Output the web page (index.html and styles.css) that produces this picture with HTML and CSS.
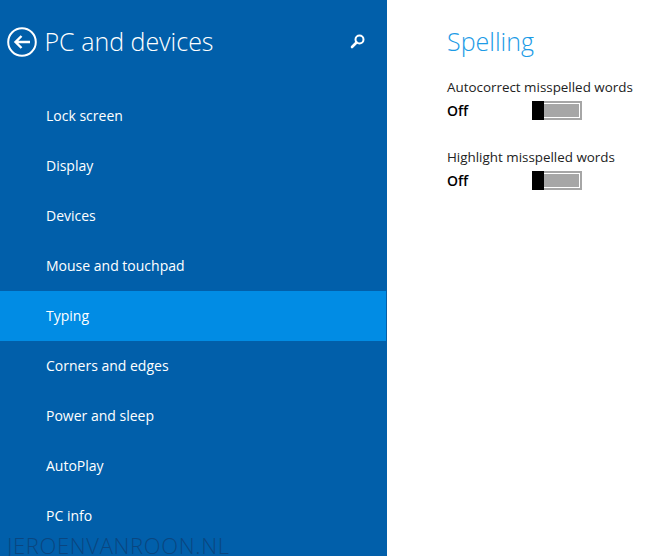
FILE: index.html
```html
<!DOCTYPE html>
<html lang="en">
<head>
<meta charset="utf-8">
<title>PC and devices</title>
<link rel="stylesheet" href="styles.css">
</head>
<body>
<div class="app">
  <nav class="side">
    <header class="head">
      <svg class="back" width="30" height="30" viewBox="0 0 30 30">
        <circle cx="15" cy="15" r="13.8" fill="none" stroke="#fff" stroke-width="2"/>
        <path d="M23 15H9M14.5 9L8.5 15L14.5 21" fill="none" stroke="#fff" stroke-width="2.4"/>
      </svg>
      <h1 class="title">PC and devices</h1>
      <svg class="search" width="16" height="16" viewBox="0 0 16 16">
        <circle cx="9.5" cy="6.5" r="4" fill="none" stroke="#fff" stroke-width="2"/>
        <path d="M6.5 9.5L2 14" fill="none" stroke="#fff" stroke-width="2.6" stroke-linecap="round"/>
      </svg>
    </header>
    <ul class="menu">
      <li class="item">Lock screen</li>
      <li class="item">Display</li>
      <li class="item">Devices</li>
      <li class="item">Mouse and touchpad</li>
      <li class="item active">Typing</li>
      <li class="item">Corners and edges</li>
      <li class="item">Power and sleep</li>
      <li class="item">AutoPlay</li>
      <li class="item">PC info</li>
    </ul>
    <div class="mark">JEROENVANROON.NL</div>
  </nav>
  <main class="main">
    <h2 class="section">Spelling</h2>
    <div class="setting">
      <div class="label">Autocorrect misspelled words</div>
      <div class="row">
        <span class="state">Off</span>
        <span class="toggle"><span class="knob"></span><span class="fill"></span></span>
      </div>
    </div>
    <div class="setting">
      <div class="label">Highlight misspelled words</div>
      <div class="row">
        <span class="state">Off</span>
        <span class="toggle"><span class="knob"></span><span class="fill"></span></span>
      </div>
    </div>
  </main>
</div>
</body>
</html>
```

FILE: styles.css
```css
* { box-sizing: border-box; }
html, body { margin: 0; padding: 0; }
body { width: 654px; height: 556px; overflow: hidden; background: #fff; font-family: "Open Sans", "Noto Sans", sans-serif; }
.app { display: flex; height: 556px; }
.side { position: relative; width: 387px; height: 556px; background: #015faa; color: #fff; flex: none; }
.head { display: flex; align-items: center; height: 91px; padding: 0 21px 8px 7px; }
.back { flex: none; }
.title { flex: 1; margin: 0 0 2px 7.5px; font-size: 25px; font-weight: 300; line-height: 40px; white-space: nowrap; }
.search { flex: none; margin-bottom: 2px; }
.menu { list-style: none; margin: 0; padding: 0; }
.item { height: 50px; line-height: 50px; padding-left: 46px; font-size: 14px; font-weight: 400; margin-right: 1px; }
.active { background: #018ce4; }
.mark { position: absolute; left: 7px; bottom: 0; height: 22px; font-size: 22px; line-height: 22px; color: #0a4680; font-weight: 300; letter-spacing: 0.65px; white-space: nowrap; }
.main { flex: 1; padding: 21px 0 0 60px; color: #222; }
.section { margin: 0 0 16px; font-size: 25px; font-weight: 300; line-height: 40px; color: #1c9be6; }
.setting { margin-bottom: 24px; }
.label { font-size: 13.4px; line-height: 20px; height: 20px; white-space: nowrap; }
.row { display: flex; align-items: center; height: 26px; }
.state { width: 85px; font-size: 14px; font-weight: 600; color: #000; }
.toggle { display: flex; width: 50px; height: 19px; border: 2px solid #a6a6a6; border-left: 0; background: #fff; }
.knob { width: 12px; height: 19px; margin-top: -2px; background: #000; flex: none; }
.fill { flex: 1; margin: 1px 1px 1px 0; background: #a6a6a6; }
```
